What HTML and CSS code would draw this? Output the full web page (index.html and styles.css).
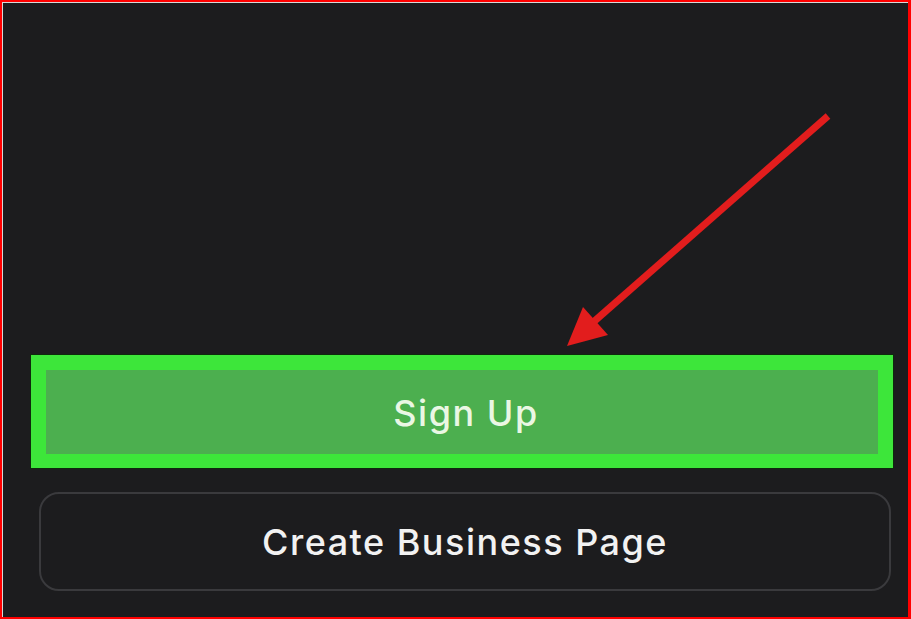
FILE: index.html
```html
<!DOCTYPE html>
<html>
<head>
<meta charset="utf-8">
<link rel="stylesheet" href="styles.css">
</head>
<body>
<div class="frame">
  <div class="actions">
    <div class="highlight">
      <button class="btn-primary">Sign Up</button>
    </div>
    <button class="btn-secondary">Create Business Page</button>
  </div>
  <svg class="arrow" width="911" height="619" viewBox="0 0 911 619">
    <line x1="828" y1="116" x2="590" y2="325" stroke="#e21d1d" stroke-width="7"/>
    <polygon points="567,346 583,307 608,335" fill="#e21d1d"/>
  </svg>
</div>
</body>
</html>
```
FILE: styles.css
```css
* { box-sizing: border-box; }
html, body { margin: 0; padding: 0; background: #1c1c1e; }
.frame {
  position: relative;
  width: 911px;
  height: 619px;
  border-style: solid;
  border-color: #ff0000;
  border-width: 2px 3px 2px 2px;
  box-shadow: inset 1px 1px 0 #d8d8d8;
  background: #1c1c1e;
  display: flex;
  flex-direction: column;
  justify-content: flex-end;
  overflow: hidden;
}
.actions {
  display: flex;
  flex-direction: column;
  gap: 24px;
  padding: 0 0 26px 29px;
}
.highlight {
  width: 862px;
  height: 113px;
  background: #3de63a;
  padding: 15px 15px 14px 15px;
  outline: 1px solid #0e2a0c;
}
.btn-primary {
  width: 100%;
  height: 100%;
  border: none;
  background: #4caf4f;
  color: #eaf7e4;
  font-family: Inter, "Noto Sans", sans-serif;
  font-size: 36px;
  font-weight: 500;
  letter-spacing: 1.5px;
  padding: 2px 0 0 8px;
}
.btn-secondary {
  margin-left: 8px;
  width: 852px;
  height: 99px;
  background: #1c1c1e;
  border: 2px solid #3a3a3d;
  border-radius: 20px;
  color: #f2f2f2;
  font-family: Inter, "Noto Sans", sans-serif;
  font-size: 36px;
  font-weight: 500;
  letter-spacing: 1.5px;
  padding: 0;
}
.arrow {
  position: absolute;
  left: -2px;
  top: -2px;
  pointer-events: none;
}
```
